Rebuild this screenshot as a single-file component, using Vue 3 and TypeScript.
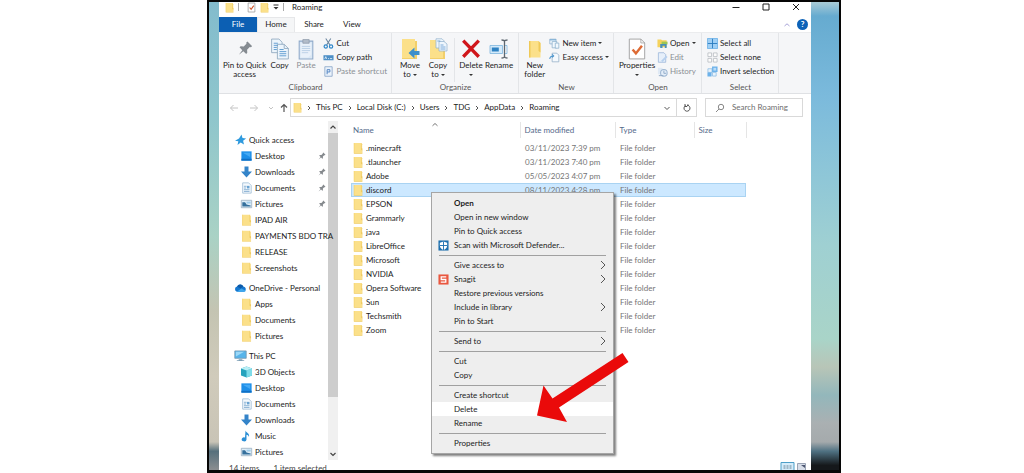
<script setup lang="ts">
import { ref } from 'vue'

interface TreeItem { label: string; icon: string; pinned?: boolean }
interface TreeGroup { label: string; icon: string; items: TreeItem[] }
interface FolderRow { name: string; modified: string }
interface MenuItem { label: string; icon?: string; bold?: boolean; sub?: boolean; active?: boolean }

const folderShape = '<path d="M1 1h8.500l1.500 1.500v10.500H1z" fill="#fbe08a"/><path d="M9.500 1v8l1.500 1v3H1v.8h10.300V7.500L10.300 7V1z" fill="#f0cb62"/><path d="M1 1h1v12H1z" fill="#f6d678"/>'
const pageShape = '<path d="M1.500 1h7l3 3v9h-10z" fill="#f4f9fd" stroke="#8fb3cf" stroke-width=".8"/>'

const icons: Record<string, { box: string; body: string }> = {
  folder: { box: '0 0 12 14', body: folderShape },
  check: { box: '0 0 12 14', body: '<path d="M1.500 1h9v12h-9z" fill="#fff" stroke="#9a9a9a"/><path d="M3.500 7l2 2.500L9 4.500" fill="none" stroke="#d0562c" stroke-width="1.500"/>' },
  pinBig: { box: '0 0 16 16', body: '<g transform="rotate(45 8 8)"><path d="M4.500 0h7v1.800l-1 .8v4l2.500 2.200v1.700H8.800L8 16.500l-.8-6H3V8.800l2.500-2.200v-4l-1-.8z" fill="#858b91"/></g>' },
  copy: { box: '0 0 18 21', body: '<g fill="#edf5fc" stroke="#8da6bd" stroke-width=".8"><path d="M1 1h7l3 3v10H1z"/><path d="M6.500 6h6.500l4 4v10H6.500z"/></g><path d="M3 5h4M3 7h4M3 9h3M3 11h3M8.500 11h4M8.500 13h6.500M8.500 15h6.500M8.500 17h6.500" stroke="#5f9bd0" stroke-width=".9"/><path d="M13 6v4h4" fill="none" stroke="#8da6bd" stroke-width=".8"/>' },
  paste: { box: '0 0 16 21', body: '<path d="M1.500 3h13v17h-13z" fill="#dbe8f5" stroke="#8fa9c9"/><path d="M3 5h10v11l-3 2.500H3z" fill="#e9f1fa"/><path d="M5 1.500h6V5H5z" fill="#b3bdca" stroke="#8c98a8" stroke-width=".7"/><path d="M4 8h8M4 10h8M4 12h8M4 14h6" stroke="#b5cbe4" stroke-width=".8"/>' },
  cut: { box: '0 0 12 12', body: '<path d="M3 .5l4.500 7M8.500 .5L4 7.500" stroke="#6c87a0" stroke-width="1.100"/><circle cx="3" cy="9.300" r="1.800" fill="none" stroke="#2f86c8" stroke-width="1.300"/><circle cx="8.800" cy="9.300" r="1.800" fill="none" stroke="#2f86c8" stroke-width="1.300"/>' },
  path: { box: '0 0 12 12', body: '<path d="M.500 3.500h11v5.500H.500z" fill="#4d8fc6"/><path d="M2 7.500l1-2.400 1 2.400M5.500 7.200h1M7.500 7.200H10" stroke="#e8f3fb" stroke-width=".9" fill="none"/>' },
  shortcut: { box: '0 0 12 12', body: '<path d="M2 .8h8v10.400H2z" fill="#eaf2fb" stroke="#89a5c8" stroke-width=".9"/><path d="M4.500 9V4h3v2.500h-3" fill="none" stroke="#4c7fc0" stroke-width="1"/>' },
  moveTo: { box: '0 0 20 22', body: '<path d="M2 1h13v2h2v18H2z" fill="#fbe08a"/><path d="M15 3h2v18H2v-1h13z" fill="#f2cf6a"/><path d="M19.500 13h-5V9.500L8.500 15l6 5.500V17h5z" fill="#3d8fcb"/>' },
  copyTo: { box: '0 0 20 22', body: '<path d="M2 2h12v2h3v17H2z" fill="#fbe08a"/><path d="M15 12h2v9H2v-1h13z" fill="#f2cf6a"/><g fill="#eef6fd" stroke="#8fb0cb" stroke-width=".7"><path d="M8 .8h6l2 2V10H8z"/><path d="M11 3.500h5l3 2.500v7h-8z"/></g><path d="M12.500 7h3M12.500 9h5M12.500 11h5M9.300 3h3" stroke="#5f9bd0" stroke-width=".8"/>' },
  remove: { box: '0 0 18 18', body: '<path d="M2 1.500l14 14.500M16 1.500L2 16" stroke="#d0161b" stroke-width="3"/>' },
  rename: { box: '0 0 20 20', body: '<path d="M1 6.500h12.500v8H1z" fill="#d4eafa" stroke="#7cb5dd" stroke-width=".8"/><path d="M2.800 8.500h7v4h-7z" fill="#2f82c2"/><path d="M12.500 1c2 0 3 .5 3 1.500 0-1 1-1.500 3-1.500M15.500 2v15.500M12.500 19c2 0 3-.5 3-1.500 0 1 1 1.500 3 1.500" fill="none" stroke="#5d666e" stroke-width="1.300"/><path d="M16 6.500h2v8h-2" fill="none" stroke="#7cb5dd" stroke-width=".8"/>' },
  newFolder: { box: '0 0 18 22', body: '<path d="M3 3h9.500l2 2v14.500H3z" fill="#fbe08a"/><path d="M12.500 3v10l2 1.500V5zM3 3h1.500v16.500H3z" fill="#efc958"/>' },
  newItem: { box: '0 0 14 13', body: '<g fill="#f2f8fd" stroke="#86abc9" stroke-width=".9"><path d="M1 1h8v6H1z"/><path d="M4 4h6v8H4z"/><path d="M8 6h4.500v6.500H8z"/></g><path d="M1 1h8v1.600H1z" fill="#7fb0d6"/>' },
  easy: { box: '0 0 14 13', body: '<path d="M4 1h6l2.500 2.500V12H4z" fill="#f5f9fd" stroke="#8ba9c4" stroke-width=".9"/><path d="M1 8.500c0-3 2-4 4.500-4M4 2.500l2 2-2 2" fill="none" stroke="#4a94cc" stroke-width="1.300"/>' },
  properties: { box: '0 0 16 20', body: '<path d="M1 1h10.500L15 4.500V19H1z" fill="#fff" stroke="#9b9b9b" stroke-width=".8"/><path d="M11.500 1v3.500H15" fill="none" stroke="#9b9b9b" stroke-width=".7"/><path d="M4 10.500l3 3.500L12.500 7" fill="none" stroke="#dd6b35" stroke-width="2.200"/>' },
  open: { box: '0 0 12 12', body: '<path d="M.5 1.500h4l1 1h5V10H.5z" fill="#f5d25c"/><path d="M5 4h6.500v3H5z" fill="#9bc654"/><path d="M3.500 6.500h7v4.500h-2V8.500H6V11H3.500z" fill="#4a90b8"/>' },
  edit: { box: '0 0 12 12', body: '<path d="M1.500 .8h6l2 2v8.400h-8z" fill="#e6effa" stroke="#9fb9da" stroke-width=".9"/><path d="M4.500 9.500L10 4l1.500 1.500L6 11z" fill="#b7d0ee"/>' },
  history: { box: '0 0 12 12', body: '<path d="M1 2h5v7H1z" fill="#dfe9f5"/><circle cx="7.500" cy="7.500" r="3.600" fill="#e3edf8" stroke="#9db6d2" stroke-width="1.100"/><path d="M2 10.500h5M7.500 5v3H10" stroke="#8fa8c6" stroke-width="1" fill="none"/>' },
  selectAll: { box: '0 0 12 12', body: '<path d="M.5 .5h11v11H.5z" fill="#9fcff5"/><path d="M6 .5v11M.5 6h11" stroke="#2a7cc0" stroke-width="1"/><path d="M.5 .5h11v11H.5z" fill="none" stroke="#6bb0e5" stroke-width=".9"/>' },
  selectNone: { box: '0 0 12 12', body: '<g fill="#fcfcfc" stroke="#b2b8bd" stroke-width=".8"><path d="M1 1h4v4H1zM7 1h4v4H7zM1 7h4v4H1zM7 7h4v4H7z"/></g>' },
  invert: { box: '0 0 12 12', body: '<path d="M1 3h4.500v4H1zM6 7h4v4H6z" fill="#e8f3fc" stroke="#86b9e3" stroke-width=".8"/><path d="M5.500 .5h6v6h-6zM.5 7H5v4.500H.5z" fill="#6db2ea"/><path d="M7 2h3v3H7z" fill="#b9dbf7"/>' },
  star: { box: '0 0 12 12', body: '<path d="M7 .5l1 3.600 3.600.4-3 2.300.9 3.700-3.300-2L3 11l.8-3.800L.5 6.800 4.500 4.500z" fill="#2f9ade"/>' },
  desktop: { box: '0 0 14 12', body: '<path d="M1.500 1h11v10h-11z" fill="#1e8fe8"/><path d="M1.500 9h11v2h-11z" fill="#0f6fc4"/><path d="M3 2.500h8v4.500z" fill="#45aaf5"/>' },
  download: { box: '0 0 12 12', body: '<path d="M4 .5h4v5h3.500L6 11.500.5 5.500H4z" fill="#3484c9"/>' },
  document: { box: '0 0 12 14', body: pageShape + '<path d="M3 5h3M3 7h2.500M3 9h6.500M3 11h6.500" stroke="#6f9fc8" stroke-width=".9"/><path d="M6.500 4.500h3v3h-3z" fill="#6aa3d2"/>' },
  picture: { box: '0 0 14 12', body: '<path d="M1.400 2h11.200v8H1.400z" fill="#dfeef8" stroke="#93aabd" stroke-width=".8"/><path d="M2.500 8.800V4h3l1.500 2.500 4.500 1v1.300z" fill="#35709c"/><path d="M7 3.500h4.500v2H7z" fill="#9fcdeb"/>' },
  cloud: { box: '0 0 16 12', body: '<path d="M3.500 10.500a3.200 3.200 0 01.3-6.200A4.300 4.300 0 0111.500 4a3.400 3.400 0 011 6.500z" fill="#1577cf"/><path d="M3.500 10.500L9 6.500l5.500 2.800a2 2 0 01-2 1.200z" fill="#3fa8ee"/><path d="M3.800 4.300A4.300 4.300 0 0111.500 4L8 6.500z" fill="#0d5aa8"/>' },
  pc: { box: '0 0 14 13', body: '<path d="M.8 1h12.400v8H.8z" fill="#57b4ea" stroke="#7393aa" stroke-width=".8"/><path d="M2 2h9L2 7z" fill="#9bd8f8"/><path d="M5 10h4v1h2v1H3v-1h2z" fill="#7fa0b6"/>' },
  cube: { box: '0 0 12 12', body: '<path d="M6 .5l5.500 2v7L6 11.500.5 9.500v-7z" fill="#26a3bd"/><path d="M6 4.500l5.500-2v7L6 11.500z" fill="#7fdce9"/><path d="M6 .5l5.500 2-5.500 2-5.500-2z" fill="#b9eff5"/>' },
  music: { box: '0 0 12 12', body: '<path d="M5 .5c.5 2.500 4.500 2.500 3.500 6.500C8 5.500 7 5 6 4.800V9.500a2.400 2 0 11-1.500-2z" fill="#2b8fd6"/>' },
  pin: { box: '0 0 12 12', body: '<g transform="rotate(45 6 6)"><path d="M4 .5h4v1.200l-.6.6v2.500L9 6.300v1H6.500L6 11.500l-.5-4.200H3v-1l1.600-1.500V2.300L4 1.700z" fill="#85898d"/></g>' },
  defender: { box: '0 0 12 12', body: '<path d="M.5 .5h11v11H.5z" fill="#1d6fae"/><path d="M6 1.500L10 3v3c0 2.300-1.500 3.800-4 5-2.500-1.200-4-2.700-4-5V3z" fill="#fff"/><path d="M6 1.500v9.500M2 6h8" stroke="#1d6fae" stroke-width="1"/>' },
  snagit: { box: '0 0 12 12', body: '<path d="M.5 .5h11v11H.5z" fill="#e9573f"/><path d="M9 3.200H3.500V6h5v2.800H3" fill="none" stroke="#fff" stroke-width="1.400"/>' },
}

const box = (n: string) => icons[n].box
const body = (n: string) => icons[n].body

const crumbs = ['This PC', 'Local Disk (C:)', 'Users', 'TDG', 'AppData', 'Roaming']

const tree: TreeGroup[] = [
  { label: 'Quick access', icon: 'star', items: [
    { label: 'Desktop', icon: 'desktop', pinned: true },
    { label: 'Downloads', icon: 'download', pinned: true },
    { label: 'Documents', icon: 'document', pinned: true },
    { label: 'Pictures', icon: 'picture', pinned: true },
    { label: 'IPAD AIR', icon: 'folder' },
    { label: 'PAYMENTS BDO TRA', icon: 'folder' },
    { label: 'RELEASE', icon: 'folder' },
    { label: 'Screenshots', icon: 'folder' },
  ] },
  { label: 'OneDrive - Personal', icon: 'cloud', items: [
    { label: 'Apps', icon: 'folder' },
    { label: 'Documents', icon: 'folder' },
    { label: 'Pictures', icon: 'folder' },
  ] },
  { label: 'This PC', icon: 'pc', items: [
    { label: '3D Objects', icon: 'cube' },
    { label: 'Desktop', icon: 'desktop' },
    { label: 'Documents', icon: 'document' },
    { label: 'Downloads', icon: 'download' },
    { label: 'Music', icon: 'music' },
    { label: 'Pictures', icon: 'picture' },
  ] },
]

const folders: FolderRow[] = [
  { name: '.minecraft', modified: '03/11/2023 7:39 pm' },
  { name: '.tlauncher', modified: '03/11/2023 7:40 pm' },
  { name: 'Adobe', modified: '05/05/2023 4:07 pm' },
  { name: 'discord', modified: '08/11/2023 4:28 pm' },
  ...['EPSON', 'Grammarly', 'java', 'LibreOffice', 'Microsoft', 'NVIDIA', 'Opera Software', 'Sun', 'Techsmith', 'Zoom']
    .map((name) => ({ name, modified: '' })),
]
const selected = ref('discord')

const menu: MenuItem[][] = [
  [
    { label: 'Open', bold: true },
    { label: 'Open in new window' },
    { label: 'Pin to Quick access' },
    { label: 'Scan with Microsoft Defender...', icon: 'defender' },
  ],
  [
    { label: 'Give access to', sub: true },
    { label: 'Snagit', icon: 'snagit', sub: true },
    { label: 'Restore previous versions' },
    { label: 'Include in library', sub: true },
    { label: 'Pin to Start' },
  ],
  [{ label: 'Send to', sub: true }],
  [{ label: 'Cut' }, { label: 'Copy' }],
  [{ label: 'Create shortcut' }, { label: 'Delete', active: true }, { label: 'Rename' }],
  [{ label: 'Properties' }],
]
</script>

<template>
  <div class="page">
    <main class="desktop">
      <section class="window">
        <header class="titlebar">
          <svg class="ic-s" :viewBox="box('folder')" v-html="body('folder')" />
          <i class="bar" />
          <svg class="ic-s" :viewBox="box('check')" v-html="body('check')" />
          <svg class="ic-s" :viewBox="box('folder')" v-html="body('folder')" />
          <svg class="qat" viewBox="0 0 6 6"><path d="M.5 1h5" stroke="#333" /><path d="M.5 3h5L3 5.500z" fill="#333" /></svg>
          <i class="bar" />
          <h1>Roaming</h1>
          <div class="controls">
            <button aria-label="Minimize"><svg viewBox="0 0 10 10"><path d="M1.500 5.500h7" /></svg></button>
            <button aria-label="Maximize"><svg viewBox="0 0 10 10"><path d="M2 2h6v6H2z" /></svg></button>
            <button aria-label="Close"><svg viewBox="0 0 10 10"><path d="M2 2l6 6M8 2L2 8" /></svg></button>
          </div>
        </header>

        <nav class="tabs">
          <button class="tab file">File</button>
          <button class="tab current">Home</button>
          <button class="tab">Share</button>
          <button class="tab">View</button>
          <span class="grow" />
          <button class="collapse" aria-label="Collapse ribbon"><svg viewBox="0 0 8 8"><path d="M1.500 5L4 2.800 6.500 5" fill="none" stroke="#a8a4d8" /></svg></button>
          <button class="help" aria-label="Help">?</button>
        </nav>

        <div class="ribbon">
          <div class="group clipboard">
            <div class="tools">
              <button class="big wide"><svg class="pin-ic" :viewBox="box('pinBig')" v-html="body('pinBig')" /><span>Pin to Quick<br>access</span></button>
              <button class="big"><svg :viewBox="box('copy')" v-html="body('copy')" /><span>Copy</span></button>
              <button class="big dim"><svg :viewBox="box('paste')" v-html="body('paste')" /><span>Paste</span></button>
              <div class="small">
                <button><svg :viewBox="box('cut')" v-html="body('cut')" />Cut</button>
                <button><svg :viewBox="box('path')" v-html="body('path')" />Copy path</button>
                <button class="dim"><svg :viewBox="box('shortcut')" v-html="body('shortcut')" />Paste shortcut</button>
              </div>
            </div>
            <p>Clipboard</p>
          </div>
          <div class="group organize">
            <div class="tools">
              <button class="big"><svg :viewBox="box('moveTo')" v-html="body('moveTo')" /><span>Move<br>to <i class="caret" /></span></button>
              <button class="big"><svg :viewBox="box('copyTo')" v-html="body('copyTo')" /><span>Copy<br>to <i class="caret" /></span></button>
              <i class="rule" />
              <button class="big"><svg :viewBox="box('remove')" v-html="body('remove')" /><span>Delete<br><i class="caret" /></span></button>
              <button class="big"><svg :viewBox="box('rename')" v-html="body('rename')" /><span>Rename</span></button>
            </div>
            <p>Organize</p>
          </div>
          <div class="group new">
            <div class="tools">
              <button class="big"><svg :viewBox="box('newFolder')" v-html="body('newFolder')" /><span>New<br>folder</span></button>
              <div class="small">
                <button><svg :viewBox="box('newItem')" v-html="body('newItem')" />New item <i class="caret" /></button>
                <button><svg :viewBox="box('easy')" v-html="body('easy')" />Easy access <i class="caret" /></button>
              </div>
            </div>
            <p>New</p>
          </div>
          <div class="group opening">
            <div class="tools">
              <button class="big wide"><svg :viewBox="box('properties')" v-html="body('properties')" /><span>Properties<br><i class="caret" /></span></button>
              <div class="small">
                <button><svg :viewBox="box('open')" v-html="body('open')" />Open <i class="caret" /></button>
                <button class="dim"><svg :viewBox="box('edit')" v-html="body('edit')" />Edit</button>
                <button class="dim"><svg :viewBox="box('history')" v-html="body('history')" />History</button>
              </div>
            </div>
            <p>Open</p>
          </div>
          <div class="group select">
            <div class="tools">
              <div class="small">
                <button><svg :viewBox="box('selectAll')" v-html="body('selectAll')" />Select all</button>
                <button><svg :viewBox="box('selectNone')" v-html="body('selectNone')" />Select none</button>
                <button><svg :viewBox="box('invert')" v-html="body('invert')" />Invert selection</button>
              </div>
            </div>
            <p>Select</p>
          </div>
        </div>

        <div class="location">
          <div class="history">
            <button aria-label="Back"><svg viewBox="0 0 10 10"><path d="M9 5H1.500M4.500 2L1.500 5l3 3" stroke="#c4c4c4" /></svg></button>
            <button aria-label="Forward"><svg viewBox="0 0 10 10"><path d="M1 5h7.500M5.500 2l3 3-3 3" stroke="#c4c4c4" /></svg></button>
            <button class="tiny" aria-label="Recent locations"><svg viewBox="0 0 10 10"><path d="M3 4l2 2 2-2" stroke="#c4c4c4" /></svg></button>
            <button class="tiny" aria-label="Up"><svg viewBox="0 0 10 10"><path d="M5 9V1.500M2 4.500l3-3 3 3" stroke="#555" stroke-width="1.200" /></svg></button>
          </div>
          <div class="address">
            <svg class="ic-s" :viewBox="box('folder')" v-html="body('folder')" />
            <template v-for="c in crumbs" :key="c">
              <svg class="crumb-sep" viewBox="0 0 6 8"><path d="M2 2l2 2-2 2" fill="none" stroke="#555" /></svg>
              <button>{{ c }}</button>
            </template>
            <span class="grow" />
            <button class="drop" aria-label="Show history"><svg viewBox="0 0 10 10"><path d="M2.500 4L5 6.500 7.500 4" /></svg></button>
            <button class="refresh" aria-label="Refresh"><svg viewBox="0 0 10 10"><path d="M3.500 2.600A3 3 0 105 2.200h2M3 1v2.500h2.200" /></svg></button>
          </div>
          <label class="search">
            <svg viewBox="0 0 10 10"><circle cx="6" cy="4" r="2.700" /><path d="M4 6L1 9" /></svg>
            <input type="text" placeholder="Search Roaming" aria-label="Search Roaming">
          </label>
        </div>

        <div class="content">
          <aside class="tree">
            <ul v-for="g in tree" :key="g.label">
              <li class="root"><svg :viewBox="box(g.icon)" v-html="body(g.icon)" /><span>{{ g.label }}</span></li>
              <li v-for="i in g.items" :key="i.label">
                <svg :viewBox="box(i.icon)" v-html="body(i.icon)" /><span>{{ i.label }}</span>
                <svg v-if="i.pinned" class="pin" :viewBox="box('pin')" v-html="body('pin')" />
              </li>
            </ul>
          </aside>
          <div class="scroll">
            <button aria-label="Scroll up"><svg viewBox="0 0 10 10"><path d="M2.500 6.500L5 4l2.500 2.500" /></svg></button>
            <div class="thumb" />
            <button aria-label="Scroll down"><svg viewBox="0 0 10 10"><path d="M2.500 4L5 6.500 7.500 4" /></svg></button>
          </div>
          <div class="files">
            <table>
              <colgroup><col class="c-name"><col class="c-date"><col class="c-type"><col class="c-size"></colgroup>
              <thead>
                <tr><th>Name<svg class="sort" viewBox="0 0 8 5"><path d="M1.500 3.800L4 1.500l2.500 2.300" fill="none" stroke="#777" /></svg></th><th>Date modified</th><th>Type</th><th>Size</th></tr>
              </thead>
              <tbody>
                <tr v-for="f in folders" :key="f.name" :class="{ selected: f.name === selected }" @click="selected = f.name">
                  <td><span class="name"><svg :viewBox="box('folder')" v-html="body('folder')" />{{ f.name }}</span></td>
                  <td>{{ f.modified }}</td>
                  <td>File folder</td>
                  <td />
                </tr>
              </tbody>
            </table>
          </div>
        </div>

        <footer class="status">
          <span>14 items</span><span>1 item selected</span>
          <span class="grow" />
          <svg class="view on" viewBox="0 0 14 10"><path d="M.5 .5h13v9H.5z" fill="#d5ecfa" stroke="#4d9fc8" /><path d="M3 4h2M6 4h2M9 4h2M3 6h2M6 6h2M9 6h2" stroke="#6a8496" /></svg>
          <svg class="view" viewBox="0 0 10 8"><path d="M.5 .5h8v7h-8z" fill="#d7dde8" stroke="#9aa3b4" /><path d="M4 2h4v3z" fill="#4b5570" /></svg>
        </footer>

        <div class="menu" role="menu">
          <div v-for="(g, n) in menu" :key="n" class="menu-group">
            <button v-for="m in g" :key="m.label" role="menuitem" :class="{ bold: m.bold, active: m.active }">
              <span class="slot"><svg v-if="m.icon" :viewBox="box(m.icon)" v-html="body(m.icon)" /></span>
              <span class="grow">{{ m.label }}</span>
              <svg v-if="m.sub" class="arrow" viewBox="0 0 6 10"><path d="M1 1l4 4-4 4" fill="none" stroke="#444" stroke-width=".9" /></svg>
            </button>
          </div>
        </div>

        <svg class="pointer" viewBox="0 0 92 71" aria-hidden="true"><path d="M85.500 1l6 9L22 55.500l8 14.500L0 63.500 6.500 33.500l9 13z" fill="#ea0a0a" /></svg>
      </section>
    </main>
  </div>
</template>

<style>
body { background: #fff; }
</style>

<style scoped>
* { box-sizing: border-box; margin: 0; padding: 0; }
.page {
  display: grid;
  grid-template-columns: 207fr 634fr 183fr;
  height: 100vh;
  overflow: hidden;
  font: 8px/9px Lato, "Open Sans", sans-serif;
  color: #1c1c1c;
}
button, input { font: inherit; color: inherit; background: none; border: 0; white-space: nowrap; }
svg { display: block; flex: none; }
.grow { flex: 1; }
.desktop {
  grid-column: 2;
  display: flex;
  min-width: 0;
  min-height: 0;
  border: 2px solid #060606;
  border-bottom-width: 3px;
  padding: 0 28px 0 10px;
  background:
    linear-gradient(#83bccd, #8fc6cc 25%, #a9d2c5 50%, #c4c4b2 66%, #d0cbbb 80%, #c9c4b6 94%, #56707c 96%, #8b8e90 100%) left / 10px 100% no-repeat,
    linear-gradient(#a9cbd6, #66abd0 3%, #7bbadc 20%, #8cc5d8 35%, #9fd0d2 52%, #a9d4c8 72%, #b8c5b7 78%, #93b7bb 84%, #aab0b2 90%, #a5aaac 94%, #4f7182 96%, #15181b 99%);
}
.window {
  position: relative;
  flex: 1;
  min-width: 0;
  display: flex;
  flex-direction: column;
  background: #fff;
}
.titlebar { display: flex; align-items: center; height: 15px; padding: 0 0 5px 6px; gap: 4px; }
.titlebar h1 { font-size: 8px; font-weight: 400; }
.ic-s { width: 9px; height: 11px; }
.bar { width: 1px; height: 8px; background: #aaa; }
.bar + h1, .bar + .ic-s { margin-left: 4px; }
.qat { width: 6px; height: 6px; }
.controls { display: flex; margin-left: auto; }
.controls button { width: 30px; display: grid; place-items: center; }
.controls svg { width: 10px; height: 10px; fill: none; stroke: #222; }
.tabs { display: flex; align-items: stretch; height: 15px; padding-right: 3px; }
.tab { width: 38px; text-align: center; }
.tab.file { background: #0c5fb3; color: #fff; }
.tab.current { background: #f5f6f7; box-shadow: inset 1px 1px #e6e7e9, inset -1px 0 #e6e7e9; }
.collapse svg { width: 8px; height: 8px; }
.collapse { margin-right: 6px; }
.help { align-self: center; width: 11px; height: 11px; border-radius: 50%; background: #0c62b8; color: #fff; font-weight: 700; }

.ribbon { display: flex; height: 62px; background: #f5f6f8; border-top: 1px solid #ebecee; border-bottom: 1px solid #dfe1e4; }
.group { display: flex; flex-direction: column; border-right: 1px solid #e3e5e8; padding: 5px 3px 1px 4px; }
.group p { text-align: center; color: #555; }
.clipboard { width: 173px; }
.organize { width: 127px; }
.new { width: 95px; }
.opening { width: 88px; }
.select { width: 77px; }
.tools { display: flex; flex: 1; }
.big { width: 28px; display: flex; flex-direction: column; align-items: center; }
.big.wide { width: 38px; }
.clipboard .big.wide { width: 45px; }
.big svg { width: 20px; height: 22px; }
.big .pin-ic { height: 22px; width: 15px; }
.big span { margin-top: 1px; display: block; }
.rule { width: 1px; height: 44px; margin: 0 2px; background: #e3e5e8; }
.small { display: flex; flex-direction: column; padding: 0 1px; margin-top: -2px; }
.clipboard .small { padding-left: 4px; }
.new .small { padding-left: 3px; }
.select .small { padding-left: 1px; }
.small button { display: flex; align-items: center; gap: 2px; height: 14px; }
.small svg { width: 11px; height: 11px; }
.dim { color: #8a8f94; }
.caret { display: inline-block; vertical-align: middle; border: 2px solid transparent; border-top-color: #333; border-bottom: 0; }

.location { display: flex; align-items: center; height: 27px; padding: 0 8px 0 5px; }
.history { display: flex; width: 66px; }
.history button { width: 20px; display: grid; place-items: center; }
.history .tiny { width: 13px; }
.location svg { width: 10px; height: 10px; fill: none; stroke: #555; }
.location .ic-s { width: 9px; height: 11px; stroke: none; margin-left: 2px; }
.location .crumb-sep { width: 6px; height: 8px; margin: 0 4px; }
.address { flex: 1; min-width: 0; display: flex; align-items: center; height: 19px; border: 1px solid #d9d9d9; }
.drop { width: 19px; display: grid; place-items: center; }
.refresh { width: 20px; height: 17px; border-left: 1px solid #d9d9d9; display: grid; place-items: center; }
.search { display: flex; align-items: center; width: 98px; height: 19px; margin-left: 8px; padding-left: 9px; gap: 7px; border: 1px solid #d9d9d9; }
.search svg { stroke: #888; }
.search input { flex: 1; min-width: 0; outline: 0; }
.search input::placeholder { color: #6d6d6d; opacity: 1; }

.content { flex: 1; display: flex; min-height: 0; overflow: hidden; }
.tree { position: relative; z-index: 1; width: 109px; padding-top: 11px; }
.tree ul { list-style: none; margin-bottom: 4px; }
.tree li { display: flex; align-items: center; height: 16px; padding-left: 21px; gap: 2px; white-space: nowrap; }
.tree li.root { padding-left: 15px; }
.tree svg { width: 13px; height: 12px; }
.tree .pin { width: 9px; height: 9px; margin: 0 2px 0 auto; }
.scroll { width: 10px; display: flex; flex-direction: column; background: #f0f0f0; }
.scroll button { height: 12px; display: grid; place-items: center; }
.scroll svg { width: 10px; height: 10px; fill: none; stroke: #444; stroke-width: 1.200; }
.thumb { height: 264px; margin-bottom: auto; background: #cdcdcd; }
.files { flex: 1; min-width: 0; padding: 1px 0 0 13px; }
table { border-collapse: collapse; table-layout: fixed; width: 395px; }
.c-name { width: 169px; }
.c-date { width: 95px; }
.c-type { width: 79px; }
.c-size { width: 52px; }
th { position: relative; height: 16px; text-align: left; font-weight: 400; color: #54698a; border-right: 1px solid #e5e5e5; padding-left: 4px; }
th:first-child { padding-left: 2px; }
.sort { position: absolute; top: 0; left: 80px; width: 8px; height: 5px; }
tbody::before { content: ""; display: block; height: 3px; }
td { height: 14px; padding-left: 5px; color: #747474; white-space: nowrap; }
td:first-child { padding-left: 2px; color: #1c1c1c; }
.name { display: flex; align-items: center; gap: 3px; }
.name svg { width: 10px; height: 12px; }
.selected { background: #cce8ff; outline: 1px solid #a9d3f2; outline-offset: -1px; }

.status { display: flex; align-items: flex-start; height: 10px; padding: 4px 4px 0 10px; gap: 14px; overflow: hidden; color: #444; }
.view { width: 10px; height: 8px; margin: -1px 0 0 -12px; }
.view.on { width: 15px; height: 10px; margin-top: -2px; }

.menu { position: absolute; z-index: 2; left: 212px; top: 190px; width: 183px; padding: 3px 0; background: #eee; border: 1px solid #a5a5a5; box-shadow: 2px 2px 2px rgba(0, 0, 0, .5); }
.menu-group + .menu-group::before { content: ""; display: block; height: 1px; margin: 3px 7px 2px; background: #a0a0a0; }
.menu button { display: flex; align-items: center; width: 100%; height: 14px; padding: 0 7px 0 6px; text-align: left; }
.menu .bold { font-weight: 700; }
.menu .active { background: #fff; }
.slot { width: 16px; }
.slot svg { width: 11px; height: 11px; }
.arrow { width: 6px; height: 10px; }
.pointer { position: absolute; z-index: 3; left: 318px; top: 350px; width: 92px; height: 71px; }
</style>
